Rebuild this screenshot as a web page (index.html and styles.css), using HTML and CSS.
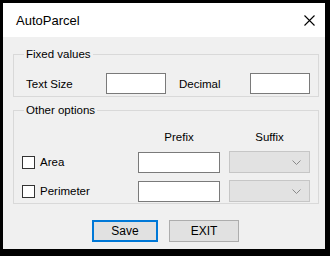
FILE: index.html
```html
<!DOCTYPE html>
<html lang="en">
<head>
	<meta charset="utf-8">
	<title>AutoParcel</title>
	<link rel="stylesheet" href="styles.css">
</head>
<body>
	<div class="window">
		<div class="titleBar">
			<span class="title">AutoParcel</span>
			<span class="btnClose">
				<svg width="11" height="11" viewBox="0 0 11 11"><path d="M0.5 0.5 L10.5 10.5 M10.5 0.5 L0.5 10.5" stroke="#000" stroke-width="1.1" fill="none"/></svg>
			</span>
		</div>
		<div class="content">
			<fieldset class="group fixedValues">
				<legend>Fixed values</legend>
				<div class="fieldRow">
					<label class="lblSize">Text Size</label>
					<input type="text" class="ipt">
					<label class="lblDecimal">Decimal</label>
					<input type="text" class="ipt">
				</div>
			</fieldset>
			<fieldset class="group otherOptions">
				<legend>Other options</legend>
				<div class="optionGrid">
					<span></span>
					<span class="colHead">Prefix</span>
					<span class="colHead suffix">Suffix</span>

					<label class="check"><span class="box"></span>Area</label>
					<input type="text" class="ipt prefix">
					<div class="combo"><svg width="9" height="5" viewBox="0 0 9 5"><path d="M0.5 0.5 L4.5 4.5 L8.5 0.5" stroke="#8a8a8a" fill="none"/></svg></div>

					<label class="check"><span class="box"></span>Perimeter</label>
					<input type="text" class="ipt prefix">
					<div class="combo"><svg width="9" height="5" viewBox="0 0 9 5"><path d="M0.5 0.5 L4.5 4.5 L8.5 0.5" stroke="#8a8a8a" fill="none"/></svg></div>
				</div>
			</fieldset>
			<div class="buttons">
				<button type="button" class="btn btnSave">Save</button>
				<button type="button" class="btn btnExit">EXIT</button>
			</div>
		</div>
	</div>
</body>
</html>
```

FILE: styles.css
```css
* {margin:0; padding:0; box-sizing:border-box;}
body {padding:3px; width:330px; height:256px; background:#000; font-family:"Liberation Sans", Arial, sans-serif; font-size:11.5px; color:#000; overflow:hidden;}
.window {width:322px; height:246px; background:#f0f0f0;}
.titleBar {display:flex; align-items:center; justify-content:space-between; height:34px; padding:0 10px 0 13px; background:#fff;}
.titleBar .title {font-size:13px;}
.titleBar .btnClose {display:flex; width:11px; height:11px;}
.content {padding:10px 6px 0 10px;}
.group {border:1px solid #d9d9d9; padding:0 8px 2px 12px;}
.group legend {margin-left:-2px; padding:0 2px; line-height:14px;}
.fieldRow {display:flex; align-items:center; padding-top:12px;}
.fieldRow .lblSize {width:80px;}
.fieldRow .lblDecimal {width:71px; margin-left:13px;}
.ipt {width:60px; height:21px; border:1px solid #7a7a7a; background:#fff; font:inherit;}
.otherOptions {margin-top:6px; padding:0 8px 1px 8px;}
.otherOptions legend {margin-left:2px;}
.optionGrid {display:grid; grid-template-columns:116px 82px 90px; grid-template-rows:14px 22px 22px; row-gap:7px; align-items:center; margin-top:13px;}
.optionGrid .colHead {text-align:center; line-height:14px;}
.optionGrid .colHead.suffix {justify-self:end; width:81px;}
.optionGrid .prefix {width:82px;}
.check {display:flex; align-items:center; gap:5px;}
.check .box {width:13px; height:13px; border:1px solid #333; background:#fff;}
.combo {justify-self:end; display:flex; align-items:center; justify-content:flex-end; width:81px; height:22px; padding-right:8px; border:1px solid #c6c6c6; background:#e2e2e2;}
.buttons {display:flex; gap:11px; padding:16px 0 0 79px;}
.btn {height:22px; font:inherit; font-size:12px; color:#000; background:#e1e1e1; border:1px solid #adadad;}
.btnSave {width:66px; border:2px solid #0078d7;}
.btnExit {width:70px;}
```
